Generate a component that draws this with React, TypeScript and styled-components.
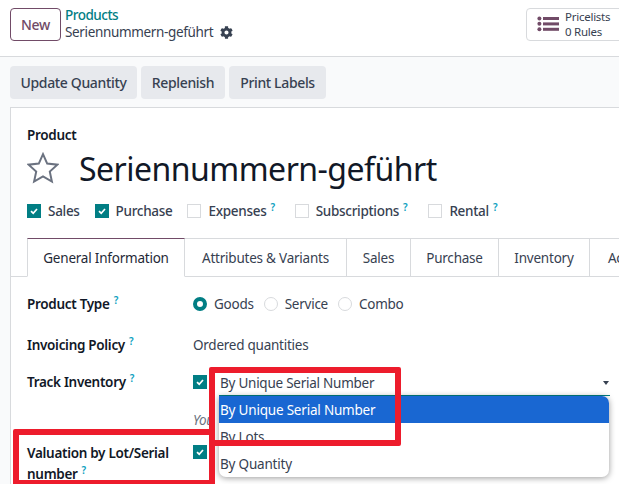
import styled, { createGlobalStyle } from "styled-components";
import { FaCog } from "react-icons/fa";

const GlobalStyle = createGlobalStyle`
  html, body {
    margin: 0;
    height: 484px;
    overflow: hidden;
    background: #fff;
    font-family: "Noto Sans", "Open Sans", sans-serif;
    font-size: 14px;
    color: #374151;
  }
`;

const Page = styled.div`
  position: relative;
  width: 619px;
  height: 484px;
  overflow: hidden;
`;

const ControlPanel = styled.header`
  display: flex;
  align-items: center;
  height: 57px;
  box-sizing: border-box;
  padding: 0 0 0 10px;
  background: #fff;
  border-bottom: 1px solid #d8dadd;
`;

const NewButton = styled.button`
  width: 51px;
  height: 33px;
  margin-top: -8px;
  padding: 0;
  font: 500 14px "Noto Sans", sans-serif;
  letter-spacing: -0.3px;
  color: #714b67;
  background: #fff;
  border: 1px solid #714b67;
  border-radius: 4px;
`;

const Breadcrumb = styled.div`
  margin: -8px 0 0 4px;
  line-height: 17px;
  font-size: 13.5px;
  letter-spacing: -0.35px;
`;

const CrumbLink = styled.div`
  font-weight: 500;
  letter-spacing: -0.5px;
  color: #017e84;
`;

const CrumbCurrent = styled.div`
  display: flex;
  align-items: center;
  gap: 7px;
  color: #374151;
`;

const StatButton = styled.div`
  display: flex;
  align-items: center;
  gap: 5px;
  width: 110px;
  height: 33px;
  margin: -8px -17px 0 auto;
  box-sizing: border-box;
  padding-left: 10px;
  background: #fff;
  border: 1px solid #d8dadd;
  border-radius: 4px;
`;

const StatText = styled.div`
  font-size: 11.5px;
  line-height: 15px;
  letter-spacing: -0.25px;
`;

const ActionBar = styled.div`
  display: flex;
  gap: 4px;
  height: 50px;
  box-sizing: border-box;
  padding: 9px 10px;
  background: #f9fafb;
`;

const ActionButton = styled.button`
  height: 33px;
  width: ${(p) => p.$w}px;
  padding: 0;
  font: 500 14px "Noto Sans", sans-serif;
  letter-spacing: -0.35px;
  color: #374151;
  background: #e7e9ed;
  border: 0;
  border-radius: 4px;
`;

const SheetWrap = styled.div`
  height: 377px;
  padding-left: 10px;
  background: #f9fafb;
`;

const Sheet = styled.main`
  height: 100%;
  box-sizing: border-box;
  padding-top: 19px;
  background: #fff;
  border-top: 1px solid #d8dadd;
  border-left: 1px solid #d8dadd;
`;

const Head = styled.div`
  padding-left: 16px;
`;

const FieldCaption = styled.div`
  font-weight: 600;
  font-size: 13.5px;
  line-height: 16px;
  letter-spacing: -0.3px;
  color: #111827;
`;

const TitleRow = styled.div`
  display: flex;
  align-items: center;
  gap: 20px;
  height: 48px;
  margin-top: 1px;
`;

const Title = styled.h1`
  margin: 0;
  font-weight: 400;
  font-size: 32px;
  letter-spacing: -0.52px;
  color: #111827;
`;

const OptionRow = styled.div`
  display: flex;
  align-items: center;
  height: 24px;
  margin-top: 7px;
`;

const Option = styled.label`
  display: flex;
  align-items: center;
  gap: 7px;
  margin-right: ${(p) => p.$gap}px;
  font-weight: 500;
  font-size: 13.5px;
  letter-spacing: -0.3px;
  color: #374151;
`;

const CheckBox = styled.span`
  display: inline-flex;
  align-items: center;
  justify-content: center;
  flex: none;
  width: 14px;
  height: 14px;
  margin-top: ${(p) => p.$top ?? 0}px;
  box-sizing: border-box;
  background: ${(p) => (p.$on ? "#017e84" : "#fff")};
  border: 1px solid ${(p) => (p.$on ? "#017e84" : "#d8dadd")};
`;

const Help = styled.sup`
  margin-left: 4px;
  font-size: 10px;
  font-weight: 600;
  line-height: 0;
  color: #0d9fc0;
`;

const Tabs = styled.nav`
  display: flex;
  height: 39px;
  box-sizing: border-box;
  margin-top: 15px;
  padding-left: 16px;
  border-bottom: 1px solid #d8dadd;
`;

const Tab = styled.div`
  flex: none;
  display: flex;
  align-items: center;
  justify-content: center;
  width: ${(p) => p.$w}px;
  height: 39px;
  box-sizing: border-box;
  font-size: 13.5px;
  letter-spacing: -0.22px;
  color: ${(p) => (p.$active ? "#1f2937" : "#374151")};
  background: #fff;
  border-top: 1px solid ${(p) => (p.$active ? "#714b67" : "#d8dadd")};
  border-right: 1px solid #d8dadd;
  border-left: ${(p) => (p.$active ? "1px solid #d8dadd" : "0")};
  border-bottom: ${(p) => (p.$active ? "1px solid #fff" : "1px solid #d8dadd")};
`;

const Form = styled.div`
  display: grid;
  grid-template-columns: 166px 1fr;
  padding: 17px 9px 0 16px;
`;

const Label = styled.div`
  height: ${(p) => p.$h}px;
  font-weight: 600;
  font-size: 13.5px;
  line-height: 21px;
  letter-spacing: -0.3px;
  color: #111827;
`;

const Value = styled.div`
  display: flex;
  align-items: flex-start;
  height: ${(p) => p.$h}px;
  font-size: 13.5px;
  line-height: 21px;
  letter-spacing: -0.25px;
  color: #374151;
`;

const Radio = styled.span`
  flex: none;
  width: 14px;
  height: 14px;
  margin: 3px 7px 0 0;
  box-sizing: border-box;
  background: #fff;
  border-radius: 50%;
  border: ${(p) => (p.$on ? "4px solid #017e84" : "1px solid #d8dadd")};
`;

const RadioText = styled.span`
  margin-right: 10px;
`;

const SelectField = styled.div`
  flex: 1;
  display: flex;
  justify-content: space-between;
  margin-left: 12px;
  height: 24px;
  box-sizing: border-box;
  padding: 1px 1px 0 1px;
  border-bottom: 1px solid #017e84;
`;

const Caret = styled.span`
  width: 0;
  height: 0;
  margin-top: 8px;
  border-left: 3.5px solid transparent;
  border-right: 3.5px solid transparent;
  border-top: 4px solid #374151;
`;

const Hint = styled.div`
  font-style: italic;
  color: #6b7280;
  padding-top: 1px;
`;

const Dropdown = styled.ul`
  position: absolute;
  left: 219px;
  top: 396px;
  width: 390px;
  height: 81px;
  margin: 0;
  padding: 0;
  list-style: none;
  overflow: hidden;
  background: #fff;
  border-radius: 0 7px 7px 7px;
  box-shadow: 0 1px 6px rgba(0, 0, 0, 0.4);
  font-size: 13.5px;
  letter-spacing: -0.2px;
`;

const DropItem = styled.li`
  height: 27px;
  padding-left: 1px;
  line-height: 28px;
  color: ${(p) => (p.$on ? "#fff" : "#374151")};
  background: ${(p) => (p.$on ? "#1967d2" : "transparent")};
`;

const RedBox = styled.div`
  position: absolute;
  box-sizing: border-box;
  left: ${(p) => p.$x}px;
  top: ${(p) => p.$y}px;
  width: ${(p) => p.$w}px;
  height: ${(p) => p.$h}px;
  border: 6px solid #ed1c2c;
  border-radius: 2px;
`;

function Check() {
  return (
    <svg width="10" height="10" viewBox="0 0 10 10">
      <path d="M2 5.2 L4.2 7.2 L8 3" fill="none" stroke="#fff" strokeWidth="1.7" />
    </svg>
  );
}

function HelpMark() {
  return <Help>?</Help>;
}

function StarOutline() {
  return (
    <svg width="32" height="32" viewBox="0 0 32 32">
      <path
        d="M16 2.2 L20.2 11.6 L30.4 12.7 L22.8 19.6 L24.9 29.6 L16 24.5 L7.1 29.6 L9.2 19.6 L1.6 12.7 L11.8 11.6 Z"
        fill="none"
        stroke="#6b7280"
        strokeWidth="2"
        strokeLinejoin="miter"
      />
    </svg>
  );
}

function ListIcon() {
  return (
    <svg width="23" height="18" viewBox="0 0 23 18" fill="#714b67">
      <circle cx="2.4" cy="3.4" r="2" />
      <circle cx="2.4" cy="8.8" r="2" />
      <circle cx="2.4" cy="14.2" r="2" />
      <rect x="6" y="2" width="16" height="3" />
      <rect x="6" y="7.4" width="16" height="3" />
      <rect x="6" y="12.8" width="16" height="3" />
    </svg>
  );
}

export default function App() {
  return (
    <Page>
      <GlobalStyle />
      <ControlPanel>
        <NewButton>New</NewButton>
        <Breadcrumb>
          <CrumbLink>Products</CrumbLink>
          <CrumbCurrent>
            Seriennummern-geführt <FaCog size={13} />
          </CrumbCurrent>
        </Breadcrumb>
        <StatButton>
          <ListIcon />
          <StatText>
            Pricelists
            <br />0 Rules
          </StatText>
        </StatButton>
      </ControlPanel>
      <ActionBar>
        <ActionButton $w={127}>Update Quantity</ActionButton>
        <ActionButton $w={84}>Replenish</ActionButton>
        <ActionButton $w={97}>Print Labels</ActionButton>
      </ActionBar>
      <SheetWrap>
        <Sheet>
          <Head>
            <FieldCaption>Product</FieldCaption>
            <TitleRow>
              <StarOutline />
              <Title>Seriennummern-geführt</Title>
            </TitleRow>
            <OptionRow>
              <Option $gap={15}>
                <CheckBox $on>
                  <Check />
                </CheckBox>
                Sales
              </Option>
              <Option $gap={15}>
                <CheckBox $on>
                  <Check />
                </CheckBox>
                Purchase
              </Option>
              <Option $gap={20}>
                <CheckBox />
                <span>
                  Expenses
                  <HelpMark />
                </span>
              </Option>
              <Option $gap={21}>
                <CheckBox />
                <span>
                  Subscriptions
                  <HelpMark />
                </span>
              </Option>
              <Option $gap={0}>
                <CheckBox />
                <span>
                  Rental
                  <HelpMark />
                </span>
              </Option>
            </OptionRow>
          </Head>
          <Tabs>
            <Tab $active $w={158}>General Information</Tab>
            <Tab $w={162}>Attributes &amp; Variants</Tab>
            <Tab $w={64}>Sales</Tab>
            <Tab $w={88}>Purchase</Tab>
            <Tab $w={91}>Inventory</Tab>
            <Tab $w={106}>Accounting</Tab>
          </Tabs>
          <Form>
            <Label $h={41}>
              Product Type
              <HelpMark />
            </Label>
            <Value $h={41}>
              <Radio $on />
              <RadioText>Goods</RadioText>
              <Radio />
              <RadioText>Service</RadioText>
              <Radio />
              <RadioText>Combo</RadioText>
            </Value>
            <Label $h={37}>
              Invoicing Policy
              <HelpMark />
            </Label>
            <Value $h={37}>Ordered quantities</Value>
            <Label $h={37}>
              Track Inventory
              <HelpMark />
            </Label>
            <Value $h={37}>
              <CheckBox $on $top={3}>
                <Check />
              </CheckBox>
              <SelectField>
                By Unique Serial Number
                <Caret />
              </SelectField>
            </Value>
            <Label $h={34} />
            <Value $h={34}>
              <Hint>You</Hint>
            </Value>
            <Label $h={44}>
              Valuation by Lot/Serial
              <br />
              number
              <HelpMark />
            </Label>
            <Value $h={44}>
              <CheckBox $on $top={2}>
                <Check />
              </CheckBox>
            </Value>
          </Form>
        </Sheet>
      </SheetWrap>
      <Dropdown>
        <DropItem $on>By Unique Serial Number</DropItem>
        <DropItem>By Lots</DropItem>
        <DropItem>By Quantity</DropItem>
      </Dropdown>
      <RedBox $x={209} $y={367} $w={192} $h={79} />
      <RedBox $x={13} $y={429} $w={202} $h={57} />
    </Page>
  );
}
